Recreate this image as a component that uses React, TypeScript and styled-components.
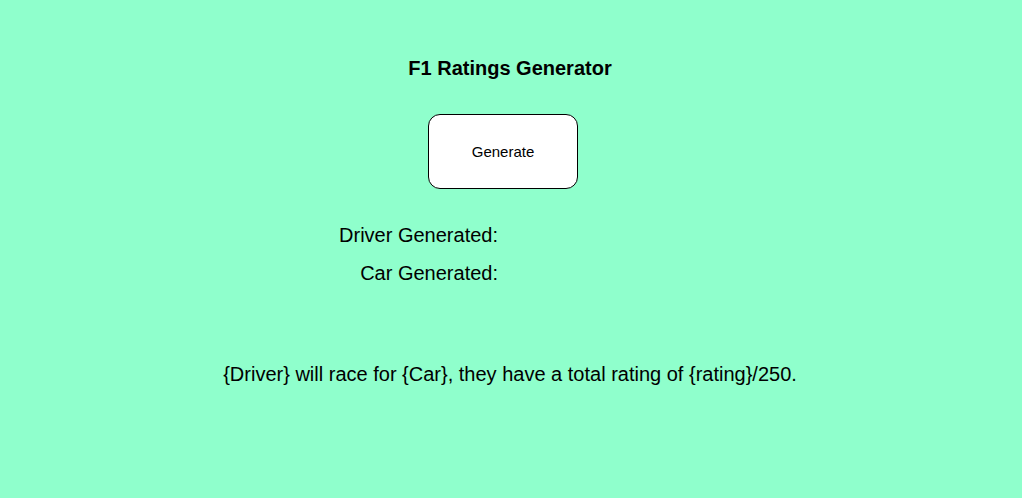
import { createGlobalStyle } from 'styled-components';
import styled from 'styled-components';

const GlobalStyle = createGlobalStyle`
  html, body {
    margin: 0;
    padding: 0;
    background: #8fffcc;
    font-family: Arial, "Liberation Sans", sans-serif;
    color: #000;
  }
`;

const Page = styled.div`
  display: flex;
  flex-direction: column;
  align-items: center;
  min-height: 498px;
  padding-top: 56px;
  box-sizing: border-box;
`;

const Title = styled.h1`
  margin: 0 2px 0 0;
  font-size: 20px;
  line-height: 24px;
  font-weight: 700;
`;

const GenerateButton = styled.button`
  margin: 34px 16px 0 0;
  width: 150px;
  height: 75px;
  box-sizing: border-box;
  background: #fff;
  border: 1px solid #000;
  border-radius: 12px;
  font-family: Arial, "Liberation Sans", sans-serif;
  font-size: 15px;
  color: #000;
  cursor: pointer;
`;

const Results = styled.div`
  margin-top: 34px;
  display: grid;
  grid-template-columns: 1fr 1fr;
  row-gap: 14px;
  width: 100%;
`;

const Label = styled.div`
  grid-column: 1;
  text-align: right;
  padding-right: 13px;
  font-size: 20px;
  line-height: 24px;
`;

const Sentence = styled.p`
  margin: 77px 2px 0 0;
  font-size: 20px;
  line-height: 24px;
`;

export default function App() {
  return (
    <>
      <GlobalStyle />
      <Page>
        <Title>F1 Ratings Generator</Title>
        <GenerateButton>Generate</GenerateButton>
        <Results>
          <Label>Driver Generated:</Label>
          <Label>Car Generated:</Label>
        </Results>
        <Sentence>
          {'{Driver} will race for {Car}, they have a total rating of {rating}/250.'}
        </Sentence>
      </Page>
    </>
  );
}
